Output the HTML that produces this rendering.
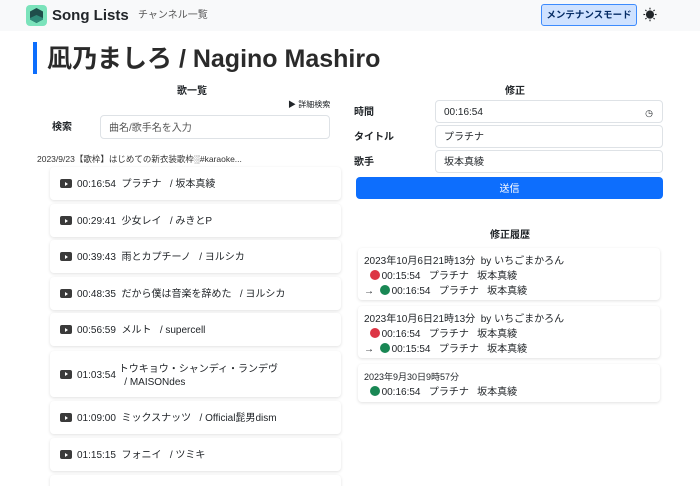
<!DOCTYPE html>
<html style="overflow:hidden;width:700px;height:486px"><head><meta charset="utf-8"><style>
*{box-sizing:border-box;margin:0;padding:0}
body{width:700px;height:486px;overflow:hidden;background:#fff;font-family:"Liberation Sans","Noto Sans CJK JP",sans-serif;color:#212529;position:relative;line-height:1.2}
.a{position:absolute}
.nav{left:0;top:0;width:700px;height:31px;background:#f8f9fa}
.inp{position:absolute;border:1px solid #dee2e6;border-radius:4px;background:#fff;font-size:10px;padding-left:8px;padding-top:3px;display:flex;align-items:center}
.item{position:absolute;left:50px;width:291px;height:33px;background:#fff;border-radius:4px;box-shadow:0 1px 3px rgba(0,0,0,.12);font-size:10px;display:flex;align-items:center;padding-left:10px;padding-top:3px}
.yt{display:inline-block;width:12px;height:9px;background:#3a3a3a;border-radius:2px;position:relative;margin-right:5px;margin-top:-3px}
.yt:after{content:"";position:absolute;left:5px;top:2.5px;border-left:3px solid #fff;border-top:2px solid transparent;border-bottom:2px solid transparent}
.card{position:absolute;left:358px;width:302px;background:#fff;border-radius:4px;box-shadow:0 1px 3px rgba(0,0,0,.12);font-size:10px;padding:6px 0 0 6px;line-height:15px}
.dot{display:inline-block;width:10px;height:10px;border-radius:50%;vertical-align:-1px;margin-right:2px}
.r{background:#dc3545}.g{background:#198754}
.lbl{font-size:10px;font-weight:bold;line-height:12px}
</style></head><body>
<div class="a nav"></div>
<div class="a" style="left:26px;top:5px;width:21px;height:21px;background:#7be3bb;border-radius:4px"></div>
<svg class="a" style="left:29px;top:7px" width="15" height="17" viewBox="0 0 15 17"><polygon points="7.5,1 14,4.5 14,12.5 7.5,16 1,12.5 1,4.5" fill="#1f4d4a"/><polygon points="7.5,8 14,11 14,12.5 7.5,16 1,12.5 1,11" fill="#2f8a78"/></svg>
<div class="a" style="left:52px;top:7px;font-size:15px;font-weight:bold;line-height:18px">Song Lists</div>
<div class="a" style="left:138px;top:10px;font-size:10px;color:#555;line-height:12px">チャンネル一覧</div>
<div class="a" style="left:541px;top:4px;width:96px;height:22px;border:1.5px solid #3d8bfd;background:#cfe2ff;border-radius:3px;font-size:9.5px;font-weight:bold;color:#052c65;display:flex;align-items:center;justify-content:center;padding-top:2px">メンテナンスモード</div>
<div class="a" style="left:643px;top:7px;font-size:14px;line-height:16px">☀</div>
<div class="a" style="left:33px;top:42px;width:4px;height:32px;background:#0d6efd"></div>
<div class="a" style="left:47px;top:43px;font-size:25px;line-height:32px;font-weight:bold;color:#2a2a2a">凪乃ましろ / Nagino Mashiro</div>
<div class="a lbl" style="left:177px;top:86px">歌一覧</div>
<div class="a" style="left:288px;top:100px;font-size:8px">▶ 詳細検索</div>
<div class="a lbl" style="left:52px;top:122px">検索</div>
<div class="inp" style="left:100px;top:115px;width:230px;height:24px;color:#555">曲名/歌手名を入力</div>
<div class="a" style="left:37px;top:154px;font-size:8.5px;color:#333">2023/9/23【歌枠】はじめての新衣装歌枠&#9617;#karaoke...</div>
<div class="item" style="top:167px"><span class="yt"></span>00:16:54&nbsp; プラチナ &nbsp; / 坂本真綾</div>
<div class="item" style="top:204px"><span class="yt"></span>00:29:41&nbsp; 少女レイ &nbsp; / みきとP</div>
<div class="item" style="top:240px"><span class="yt"></span>00:39:43&nbsp; 雨とカプチーノ &nbsp; / ヨルシカ</div>
<div class="item" style="top:277px"><span class="yt"></span>00:48:35&nbsp; だから僕は音楽を辞めた &nbsp; / ヨルシカ</div>
<div class="item" style="top:313px"><span class="yt"></span>00:56:59&nbsp; メルト &nbsp; / supercell</div>
<div class="item" style="top:351px;height:46px"><span class="yt"></span>01:03:54&nbsp;<span style="line-height:13px">トウキョウ・シャンディ・ランデヴ<br>&nbsp; / MAISONdes</span></div>
<div class="item" style="top:401px"><span class="yt"></span>01:09:00&nbsp; ミックスナッツ &nbsp; / Official髭男dism</div>
<div class="item" style="top:438px"><span class="yt"></span>01:15:15&nbsp; フォニイ &nbsp; / ツミキ</div>
<div class="item" style="top:475px"></div>
<div class="a lbl" style="left:505px;top:86px">修正</div>
<div class="a lbl" style="left:354px;top:107px">時間</div>
<div class="a lbl" style="left:354px;top:132px">タイトル</div>
<div class="a lbl" style="left:354px;top:157px">歌手</div>
<div class="inp" style="left:435px;top:100px;width:228px;height:23px">00:16:54<span style="position:absolute;right:9px;font-size:9px">&#9719;</span></div>
<div class="inp" style="left:435px;top:125px;width:228px;height:23px">プラチナ</div>
<div class="inp" style="left:435px;top:150px;width:228px;height:23px">坂本真綾</div>
<div class="a" style="left:356px;top:177px;width:307px;height:22px;background:#0d6efd;border-radius:4px;color:#fff;font-size:10px;display:flex;align-items:center;justify-content:center;padding-top:3px">送信</div>
<div class="a lbl" style="left:490px;top:230px">修正履歴</div>
<div class="card" style="top:248px;height:52px">2023年10月6日21時13分 &nbsp;by いちごまかろん<br>&nbsp;&nbsp;<span class="dot r"></span>00:15:54 &nbsp; プラチナ &nbsp; 坂本真綾<br>→ &nbsp;<span class="dot g"></span>00:16:54 &nbsp; プラチナ &nbsp; 坂本真綾</div>
<div class="card" style="top:306px;height:52px">2023年10月6日21時13分 &nbsp;by いちごまかろん<br>&nbsp;&nbsp;<span class="dot r"></span>00:16:54 &nbsp; プラチナ &nbsp; 坂本真綾<br>→ &nbsp;<span class="dot g"></span>00:15:54 &nbsp; プラチナ &nbsp; 坂本真綾</div>
<div class="card" style="top:364px;height:38px;font-size:9px">2023年9月30日9時57分<br><span style="font-size:10px">&nbsp;&nbsp;<span class="dot g"></span>00:16:54 &nbsp; プラチナ &nbsp; 坂本真綾</span></div>
</body></html>
